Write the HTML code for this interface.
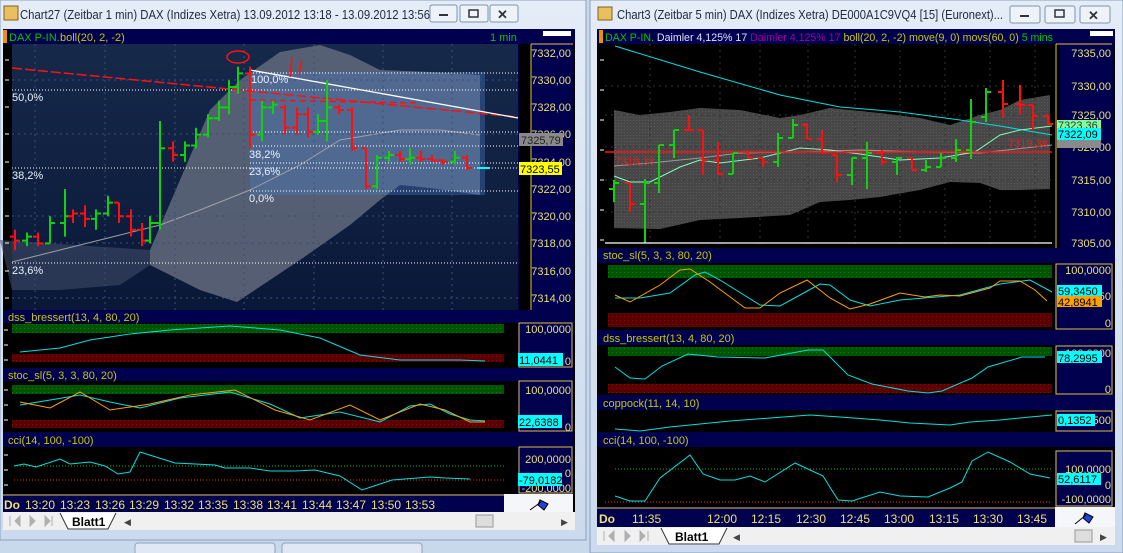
<!DOCTYPE html>
<html><head><meta charset="utf-8">
<style>
html,body{margin:0;padding:0;width:1123px;height:553px;overflow:hidden;background:#c9d9ec;}
svg{display:block;font-family:"Liberation Sans",sans-serif;}
</style></head><body>
<svg id="s" width="1123" height="553" viewBox="0 0 1123 553" xmlns="http://www.w3.org/2000/svg">
<defs>
<linearGradient id="tb" x1="0" y1="0" x2="0" y2="1"><stop offset="0" stop-color="#e4ecf7"/><stop offset="1" stop-color="#cbdaed"/></linearGradient>
<linearGradient id="lbg" x1="0" y1="0" x2="0" y2="1"><stop offset="0" stop-color="#16294a"/><stop offset="1" stop-color="#0a1838"/></linearGradient>
<pattern id="gp" width="4" height="4" patternUnits="userSpaceOnUse"><rect width="4" height="4" fill="#005400"/><rect width="1" height="1" fill="#0a7a0a"/></pattern>
<pattern id="rp" width="4" height="4" patternUnits="userSpaceOnUse"><rect width="4" height="4" fill="#5a0000"/><rect width="1" height="1" fill="#7a1010"/></pattern>
<pattern id="cp" width="3" height="3" patternUnits="userSpaceOnUse"><rect width="3" height="3" fill="#474747"/><rect width="1" height="1" fill="#5a5a5a"/></pattern>
</defs>
<rect width="1123" height="553" fill="#c9d9ec"/>
<!-- LEFT WINDOW -->
<rect x="0" y="0" width="586" height="540" fill="url(#tb)"/>
<rect x="0" y="0" width="586" height="540" fill="none" stroke="#8aa0bb"/>
<rect x="4" y="6" width="14" height="14" fill="#e8c060" stroke="#806020"/>
<text x="20" y="19" font-size="12.5" fill="#1e2a3a" textLength="410" lengthAdjust="spacingAndGlyphs">Chart27 (Zeitbar 1 min)  DAX (Indizes Xetra) 13.09.2012 13:18 - 13.09.2012 13:56</text>
<g fill="#eef3fa" stroke="#7f93ad"><rect x="430" y="5" width="27" height="17" rx="2"/><rect x="460" y="5" width="28" height="17" rx="2"/><rect x="490" y="5" width="28" height="17" rx="2"/></g>
<rect x="439" y="14" width="9" height="2" fill="#333"/><rect x="469" y="10" width="9" height="7" fill="none" stroke="#333" stroke-width="1.5"/>
<text x="497" y="19" font-size="13" fill="#333" font-weight="bold">✕</text>
<rect x="3" y="29" width="572" height="483" fill="#000"/>
<rect x="3" y="29" width="572" height="15" fill="#00004e"/>
<rect x="3" y="30" width="4" height="13" fill="#f09000"/>
<text x="9" y="41" font-size="11" fill="#00c800">DAX P-IN.</text><text x="60" y="41" font-size="11" fill="#c8c800">boll(20, 2, -2)</text>
<text x="490" y="41" font-size="11" fill="#00c800">1 min</text>
<rect x="543" y="31" width="28" height="5" fill="#fff"/>
<rect x="12" y="44" width="506" height="266" fill="url(#lbg)"/>
<rect x="3" y="44" width="9" height="266" fill="#000"/>
<polygon points="150,250 180,180 210,110 240,80 280,52 320,45 350,55 380,70 430,72 480,75 480,195 430,188 400,185 380,200 350,225 300,260 237,302 200,290 170,275 150,265" fill="#5d6679" opacity="0.9"/>
<polygon points="0,240 150,250 150,265 120,285 60,290 12,290" fill="#3d4a66" opacity="0.6"/>
<rect x="250" y="72" width="235" height="123" fill="#4a78c0" opacity="0.38"/>
<polyline points="12,262 100,240 160,225 200,210 250,190 300,165 340,140 400,130 440,130 480,135" fill="none" stroke="#a0a0a8" stroke-width="1"/>
<g stroke="#3a4f78" stroke-dasharray="2,4" stroke-width="1"><line x1="12" y1="80" x2="518" y2="80"/><line x1="12" y1="134" x2="518" y2="134"/><line x1="12" y1="216" x2="518" y2="216"/><line x1="12" y1="243" x2="518" y2="243"/><line x1="12" y1="298" x2="518" y2="298"/>
<line x1="35" y1="44" x2="35" y2="310"/><line x1="105" y1="44" x2="105" y2="310"/><line x1="175" y1="44" x2="175" y2="310"/><line x1="244" y1="44" x2="244" y2="310"/><line x1="314" y1="44" x2="314" y2="310"/><line x1="383" y1="44" x2="383" y2="310"/><line x1="452" y1="44" x2="452" y2="310"/></g>
<g stroke="#fff" stroke-dasharray="1,2" stroke-width="1"><line x1="250" y1="73" x2="518" y2="73"/><line x1="12" y1="90" x2="518" y2="90"/><line x1="250" y1="132" x2="518" y2="132"/><line x1="250" y1="146" x2="518" y2="146"/><line x1="250" y1="163" x2="518" y2="163"/><line x1="12" y1="168" x2="518" y2="168"/><line x1="250" y1="191" x2="518" y2="191"/><line x1="12" y1="263" x2="518" y2="263"/></g>
<g font-size="11" fill="#e8f0ff"><text x="12" y="101">50,0%</text><text x="12" y="179">38,2%</text><text x="12" y="274">23,6%</text><text x="251" y="83">100,0%</text><text x="249" y="158">38,2%</text><text x="249" y="175">23,6%</text><text x="249" y="202">0,0%</text></g>
<line x1="12" y1="68" x2="518" y2="117" stroke="#ff1010" stroke-width="1.5" stroke-dasharray="10,3"/>
<line x1="250" y1="70" x2="518" y2="118" stroke="#ffffff" stroke-width="1.3"/>
<line x1="250" y1="100" x2="420" y2="103" stroke="#ff1010" stroke-width="1.5" stroke-dasharray="6,4"/>
<ellipse cx="238" cy="57" rx="11" ry="6" fill="none" stroke="#ff1010" stroke-width="1.5"/>
<path d="M292,57 L290,77 M302,60 L299,75" stroke="#ff1010" stroke-width="1.5"/>
<g id="lb"></g>
<line x1="478" y1="168" x2="490" y2="168" stroke="#00ffff" stroke-width="2"/>
<rect x="518" y="44" width="55" height="266" fill="#00004e"/>
<rect x="519" y="44" width="12" height="266" fill="#000"/>
<line x1="531" y1="44" x2="531" y2="310" stroke="#e0c040"/>
<line x1="531" y1="44" x2="573" y2="44" stroke="#e0c040"/>
<g font-size="11" fill="#e8e070" text-anchor="end"><text x="571" y="57">7332,00</text><text x="571" y="84">7330,00</text><text x="571" y="111">7328,00</text><text x="571" y="138">7326,00</text><text x="571" y="166">7324,00</text><text x="571" y="193">7322,00</text><text x="571" y="220">7320,00</text><text x="571" y="247">7318,00</text><text x="571" y="275">7316,00</text><text x="571" y="302">7314,00</text></g>
<rect x="519" y="133" width="44" height="13" fill="#8a8a8a"/><text x="521" y="144" font-size="11" fill="#222">7325,79</text>
<rect x="519" y="162" width="43" height="13" fill="#ffff00"/><text x="520" y="173" font-size="11" fill="#000">7323,55</text>
<rect x="3" y="310" width="570" height="13" fill="#00004e"/><text x="8" y="321" font-size="11" fill="#c8c800">dss_bressert(13, 4, 80, 20)</text>
<rect x="12" y="324" width="504" height="9" fill="url(#gp)"/><rect x="12" y="354" width="504" height="8" fill="url(#rp)"/>
<polyline points="20,352 60,348 90,340 130,334 170,330 230,326 280,330 320,338 360,355 400,360 460,360 485,361" fill="none" stroke="#00e0e0"/>
<rect x="3" y="368" width="570" height="13" fill="#00004e"/><text x="8" y="379" font-size="11" fill="#c8c800">stoc_sl(5, 3, 3, 80, 20)</text>
<rect x="12" y="385" width="504" height="9" fill="url(#gp)"/><rect x="12" y="420" width="504" height="8" fill="url(#rp)"/>
<polyline points="20,405 50,400 80,395 110,402 140,408 180,398 230,392 270,404 300,418 340,412 380,422 410,406 430,404 450,414 470,420 485,421" fill="none" stroke="#00e0e0"/>
<polyline points="20,402 50,408 80,392 110,410 150,404 190,395 235,390 275,410 310,420 350,405 380,420 420,404 445,410 470,422 485,422" fill="none" stroke="#ffa000"/>
<rect x="3" y="432" width="570" height="15" fill="#00004e"/><text x="8" y="444" font-size="11" fill="#c8c800">cci(14, 100, -100)</text>
<line x1="14" y1="466" x2="516" y2="466" stroke="#00c000" stroke-dasharray="1,2"/><line x1="14" y1="480" x2="516" y2="480" stroke="#ff2020" stroke-dasharray="1,2"/>
<polyline points="14,466 24,464 36,467 60,459 70,464 90,462 105,466 118,474 130,472 140,452 175,463 215,465 225,468 250,468 270,471 295,471 315,470 340,476 362,490 392,480 430,477 445,478 470,479" fill="none" stroke="#00e0e0"/>
<g fill="#00004e"><rect x="518" y="323" width="55" height="45"/><rect x="518" y="381" width="55" height="51"/><rect x="518" y="447" width="55" height="47"/></g>
<g stroke="#e0c040" fill="none"><rect x="519" y="323" width="53" height="44"/><rect x="519" y="381" width="53" height="50"/><rect x="519" y="447" width="53" height="46"/></g>
<g fill="#000"><rect x="504" y="323" width="14" height="45"/><rect x="504" y="381" width="14" height="51"/><rect x="504" y="447" width="14" height="47"/></g>
<g font-size="11" fill="#e8e070" text-anchor="end"><text x="571" y="333">100,0000</text><text x="571" y="365">0</text><text x="571" y="394">100,0000</text><text x="571" y="431">0</text><text x="571" y="463">200,0000</text><text x="571" y="477">0</text><text x="571" y="492">-200,0000</text></g>
<rect x="518" y="353" width="45" height="13" fill="#00ffff"/><text x="519" y="364" font-size="11" fill="#000">11,0441</text>
<rect x="518" y="415" width="44" height="13" fill="#00ffff"/><text x="519" y="426" font-size="11" fill="#000">22,6388</text>
<rect x="518" y="473" width="44" height="13" fill="#00ffff"/><text x="519" y="484" font-size="11" fill="#000">-79,0182</text>
<g stroke="#fff"><line x1="4" y1="330" x2="8" y2="330"/><line x1="4" y1="345" x2="8" y2="345"/><line x1="4" y1="360" x2="8" y2="360"/><line x1="4" y1="390" x2="8" y2="390"/><line x1="4" y1="405" x2="8" y2="405"/><line x1="4" y1="420" x2="8" y2="420"/><line x1="4" y1="455" x2="8" y2="455"/><line x1="4" y1="470" x2="8" y2="470"/><line x1="4" y1="485" x2="8" y2="485"/></g>
<rect x="3" y="494" width="570" height="18" fill="#00004e"/><line x1="3" y1="495" x2="516" y2="495" stroke="#e0c040"/>
<rect x="504" y="494" width="69" height="18" fill="#f4f6fa"/>
<path d="M530,510 L541,502 M540,500 L548,504 L544,510 L538,505Z" stroke="#000" fill="#2040e0"/>
<g font-size="12" fill="#f0e070"><text x="4" y="509" font-weight="bold">Do</text><text x="25" y="509">13:20</text><text x="60" y="509">13:23</text><text x="95" y="509">13:26</text><text x="129" y="509">13:29</text><text x="164" y="509">13:32</text><text x="198" y="509">13:35</text><text x="233" y="509">13:38</text><text x="267" y="509">13:41</text><text x="302" y="509">13:44</text><text x="336" y="509">13:47</text><text x="371" y="509">13:50</text><text x="405" y="509">13:53</text></g>
<rect x="3" y="512" width="572" height="18" fill="#f0f0f0"/>
<path d="M10,516 v10 M20,516 l-5,5 l5,5z M30,516 l5,5 l-5,5z M45,516 l5,5 l-5,5z M52,516 v10" stroke="#b0b0b0" fill="#b0b0b0"/>
<path d="M60,513 L68,529 L108,529 L116,513" fill="#fff" stroke="#333"/>
<text x="72" y="526" font-size="12" font-weight="bold" fill="#000">Blatt1</text>
<text x="124" y="525" font-size="9" fill="#444">◀</text>
<rect x="476" y="515" width="17" height="12" fill="#ddd" stroke="#999"/><text x="561" y="525" font-size="9" fill="#444">▶</text>
<rect x="135" y="543" width="140" height="12" rx="3" fill="#dfe8f4" stroke="#8fa2bb"/>
<rect x="282" y="543" width="140" height="12" rx="3" fill="#dfe8f4" stroke="#8fa2bb"/>

<!-- RIGHT WINDOW -->
<rect x="590" y="0" width="533" height="553" fill="url(#tb)"/>
<rect x="590" y="0" width="533" height="553" fill="none" stroke="#8aa0bb"/>
<rect x="598" y="7" width="14" height="13" fill="#e8c060" stroke="#806020"/>
<text x="617" y="19" font-size="12.5" fill="#1e2a3a" textLength="386" lengthAdjust="spacingAndGlyphs">Chart3 (Zeitbar 5 min)  DAX (Indizes Xetra) DE000A1C9VQ4 [15] (Euronext)...</text>
<g fill="#eef3fa" stroke="#7f93ad"><rect x="1010" y="6" width="30" height="17" rx="2"/><rect x="1045" y="6" width="30" height="17" rx="2"/><rect x="1080" y="6" width="30" height="17" rx="2"/></g>
<rect x="1020" y="15" width="9" height="2" fill="#333"/><rect x="1055" y="10" width="9" height="7" fill="none" stroke="#333" stroke-width="1.5"/>
<text x="1088" y="20" font-size="13" fill="#333" font-weight="bold">✕</text>
<rect x="597" y="29" width="518" height="498" fill="#000"/>
<rect x="597" y="29" width="518" height="15" fill="#00004e"/>
<rect x="599" y="30" width="4" height="13" fill="#f09000"/>
<text x="605" y="41" font-size="11" textLength="448" lengthAdjust="spacingAndGlyphs"><tspan fill="#00c800">DAX P-IN.</tspan><tspan fill="#e0e0ff"> Daimler  4,125% 17 </tspan><tspan fill="#a000a0">Daimler  4,125% 17 </tspan><tspan fill="#c8c800">boll(20, 2, -2) move(9, 0) movs(60, 0)</tspan><tspan fill="#00c800">   5 mins</tspan></text>
<rect x="1090" y="31" width="23" height="5" fill="#fff"/>
<polygon points="614,110 640,115 670,112 700,108 740,110 780,118 800,115 830,108 880,113 920,118 950,125 980,115 1000,110 1020,100 1050,95 1050,189 1020,190 1000,190 980,183 950,182 920,190 880,197 850,200 820,202 790,215 740,218 700,220 660,229 614,228" fill="url(#cp)"/>
<g stroke="#333" stroke-dasharray="2,4"><line x1="605" y1="115" x2="1052" y2="115"/><line x1="605" y1="147" x2="1052" y2="147"/><line x1="605" y1="180" x2="1052" y2="180"/><line x1="605" y1="212" x2="1052" y2="212"/><line x1="605" y1="86" x2="1052" y2="86"/><line x1="650" y1="44" x2="650" y2="248"/><line x1="720" y1="44" x2="720" y2="248"/><line x1="760" y1="44" x2="760" y2="248"/><line x1="808" y1="44" x2="808" y2="248"/><line x1="855" y1="44" x2="855" y2="248"/><line x1="900" y1="44" x2="900" y2="248"/><line x1="945" y1="44" x2="945" y2="248"/><line x1="990" y1="44" x2="990" y2="248"/><line x1="1035" y1="44" x2="1035" y2="248"/></g>
<polyline points="615,46 700,72 780,95 840,107 900,112 960,120 1000,126 1052,135" fill="none" stroke="#00e0e0"/>
<polyline points="614,166 650,163 700,158 740,153 800,152 860,150 920,152 980,153 1052,145" fill="none" stroke="#9a9a9a"/>
<polyline points="614,176 630,182 650,182 680,167 700,160 720,163 760,158 800,148 830,150 860,154 900,160 940,158 975,152 1000,135 1020,130 1052,126" fill="none" stroke="#80ffc0"/>
<line x1="605" y1="152" x2="1052" y2="152" stroke="#ff1010" stroke-width="1.5"/>
<text x="615" y="165" font-size="11" fill="#e02020">7319,38</text><text x="1008" y="147" font-size="11" fill="#e02020">7319,38</text>
<g id="rb"></g>
<line x1="605" y1="243" x2="1052" y2="243" stroke="#fff" stroke-width="1.3"/>
<rect x="1055" y="44" width="58" height="204" fill="#00004e"/><rect x="1055" y="44" width="5" height="204" fill="#000"/>
<line x1="1056" y1="44" x2="1056" y2="248" stroke="#e0c040"/><line x1="1056" y1="44" x2="1112" y2="44" stroke="#e0c040"/>
<g font-size="11" fill="#e8e070" text-anchor="end"><text x="1111" y="57">7335,00</text><text x="1111" y="90">7330,00</text><text x="1111" y="119">7325,00</text><text x="1111" y="151">7320,00</text><text x="1111" y="184">7315,00</text><text x="1111" y="216">7310,00</text><text x="1111" y="247">7305,00</text></g>
<rect x="1057" y="120" width="44" height="10" fill="#80ffa0"/><text x="1058" y="129" font-size="11" fill="#333">7323,36</text>
<rect x="1057" y="128" width="44" height="12" fill="#00ffff"/><text x="1058" y="138" font-size="11" fill="#000">7322,09</text>
<rect x="1057" y="140" width="44" height="8" fill="#8a8a8a"/>
<rect x="597" y="248" width="518" height="15" fill="#00004e"/><text x="603" y="259" font-size="11" fill="#c8c800">stoc_sl(5, 3, 3, 80, 20)</text>
<rect x="608" y="265" width="444" height="13" fill="url(#gp)"/><rect x="608" y="313" width="444" height="14" fill="url(#rp)"/>
<polyline points="615,298 640,298 670,293 695,275 705,272 720,280 760,305 780,306 800,295 820,284 830,285 850,300 870,306 900,300 960,295 1000,284 1030,280 1052,292" fill="none" stroke="#00e0e0"/>
<polyline points="615,295 630,302 660,285 680,270 690,269 710,282 745,308 760,308 780,293 807,280 830,298 850,309 870,304 900,293 925,297 940,295 960,296 990,288 1000,281 1020,281 1035,290 1047,301" fill="none" stroke="#ffa000"/>
<rect x="597" y="330" width="518" height="15" fill="#00004e"/><text x="603" y="342" font-size="11" fill="#c8c800">dss_bressert(13, 4, 80, 20)</text>
<rect x="608" y="347" width="444" height="9" fill="url(#gp)"/><rect x="608" y="384" width="444" height="9" fill="url(#rp)"/>
<polyline points="615,367 630,378 645,379 662,366 688,354 718,357 765,358 808,350 823,350 848,375 872,384 908,391 928,393 942,391 972,378 988,367 1022,357 1045,357" fill="none" stroke="#00e0e0"/>
<rect x="597" y="395" width="518" height="15" fill="#00004e"/><text x="603" y="407" font-size="11" fill="#c8c800">coppock(11, 14, 10)</text>
<polyline points="615,429 640,431 670,427 700,424 730,421 770,418 810,415 840,417 880,420 910,423 950,425 970,422 1000,420 1030,417 1052,415" fill="none" stroke="#00e0e0"/>
<rect x="597" y="432" width="518" height="15" fill="#00004e"/><text x="603" y="444" font-size="11" fill="#c8c800">cci(14, 100, -100)</text>
<line x1="615" y1="469" x2="1052" y2="469" stroke="#00c000" stroke-dasharray="1,2"/><line x1="605" y1="502" x2="1052" y2="502" stroke="#ff2020" stroke-dasharray="1,2"/>
<polyline points="615,496 630,501 645,501 660,478 690,455 703,474 720,480 735,480 750,476 765,482 795,463 823,476 838,500 852,501 880,492 900,496 928,497 950,488 962,482 972,461 988,452 1010,462 1030,474 1050,478" fill="none" stroke="#00e0e0"/>
<g fill="#00004e"><rect x="1055" y="263" width="58" height="67"/><rect x="1055" y="345" width="58" height="50"/><rect x="1055" y="410" width="58" height="22"/><rect x="1055" y="450" width="58" height="57"/></g>
<g stroke="#e0c040" fill="none"><rect x="1056" y="264" width="56" height="65"/><rect x="1056" y="346" width="56" height="48"/><rect x="1056" y="411" width="56" height="20"/><rect x="1056" y="451" width="56" height="55"/></g>
<g font-size="11" fill="#e8e070" text-anchor="end"><text x="1111" y="274">100,0000</text><text x="1111" y="300">50</text><text x="1111" y="327">0</text><text x="1111" y="357">100,0000</text><text x="1111" y="393">0</text><text x="1111" y="424">0,1500</text><text x="1111" y="473">100,0000</text><text x="1111" y="489">0</text><text x="1111" y="503">-100,0000</text></g>
<rect x="1057" y="285" width="45" height="12" fill="#00ffff"/><text x="1058" y="295" font-size="11" fill="#000">59,3450</text>
<rect x="1057" y="296" width="45" height="11" fill="#ffa000"/><text x="1058" y="306" font-size="11" fill="#000">42,8941</text>
<rect x="1057" y="351" width="45" height="12" fill="#00ffff"/><text x="1058" y="362" font-size="11" fill="#000">78,2995</text>
<rect x="1057" y="414" width="38" height="12" fill="#00ffff"/><text x="1058" y="424" font-size="11" fill="#000">0,1352</text>
<rect x="1057" y="473" width="44" height="12" fill="#00ffff"/><text x="1058" y="483" font-size="11" fill="#000">52,6117</text>
<rect x="597" y="507" width="518" height="20" fill="#00004e"/><line x1="597" y1="508" x2="1055" y2="508" stroke="#e0c040"/>
<rect x="1055" y="507" width="60" height="20" fill="#f4f6fa"/>
<path d="M1075,524 L1086,515 M1085,513 L1093,517 L1089,523 L1083,518Z" stroke="#000" fill="#2040e0"/>
<g font-size="12" fill="#f0e070"><text x="599" y="523" font-weight="bold">Do</text><text x="632" y="523">11:35</text><text x="707" y="523">12:00</text><text x="751" y="523">12:15</text><text x="796" y="523">12:30</text><text x="840" y="523">12:45</text><text x="884" y="523">13:00</text><text x="929" y="523">13:15</text><text x="973" y="523">13:30</text><text x="1017" y="523">13:45</text></g>
<rect x="597" y="527" width="518" height="18" fill="#f0f0f0"/>
<path d="M604,531 v10 M614,531 l-5,5 l5,5z M625,531 l5,5 l-5,5z M640,531 l5,5 l-5,5z M648,531 v10" stroke="#b0b0b0" fill="#b0b0b0"/>
<path d="M661,528 L669,544 L719,544 L727,528" fill="#fff" stroke="#333"/>
<text x="675" y="541" font-size="12" font-weight="bold" fill="#000">Blatt1</text>
<text x="733" y="540" font-size="9" fill="#444">◀</text>
<rect x="1075" y="530" width="17" height="12" fill="#ddd" stroke="#999"/><text x="1100" y="540" font-size="9" fill="#444">▶</text>
<g stroke="#fff"><line x1="600" y1="60" x2="604" y2="60"/><line x1="600" y1="90" x2="604" y2="90"/><line x1="600" y1="120" x2="604" y2="120"/><line x1="600" y1="150" x2="604" y2="150"/><line x1="600" y1="180" x2="604" y2="180"/><line x1="600" y1="210" x2="604" y2="210"/><line x1="600" y1="240" x2="604" y2="240"/></g>
<g stroke="#fff"><line x1="5" y1="60" x2="9" y2="60"/><line x1="5" y1="80" x2="9" y2="80"/><line x1="5" y1="107" x2="9" y2="107"/><line x1="5" y1="134" x2="9" y2="134"/><line x1="5" y1="162" x2="9" y2="162"/><line x1="5" y1="189" x2="9" y2="189"/><line x1="5" y1="216" x2="9" y2="216"/><line x1="5" y1="243" x2="9" y2="243"/><line x1="5" y1="271" x2="9" y2="271"/><line x1="5" y1="298" x2="9" y2="298"/></g>
</svg>
<script>
(function(){
var NS="http://www.w3.org/2000/svg";
function bar(g,x,o,h,l,c,col){
 var p=document.createElementNS(NS,"path");
 p.setAttribute("d","M"+x+","+h+"V"+l+"M"+(x-5)+","+o+"H"+x+"M"+x+","+c+"H"+(x+5));
 p.setAttribute("stroke",col=="g"?"#10d010":"#ff1010");p.setAttribute("stroke-width","2");p.setAttribute("fill","none");
 g.appendChild(p);}
var Y=function(p){return 53+(7332-p)*13.6;};
var L=[[15,7318.5,7319,7317.5,7318.2,'r'],[27,7318.2,7318.8,7317.8,7318.5,'g'],[38,7318.5,7318.8,7317.8,7318,'r'],[50,7318,7320,7318,7319.5,'g'],[65,7319.5,7322,7318.5,7320,'g'],[73,7320,7320.5,7319.5,7320.2,'r'],[85,7320.2,7320.8,7319.2,7319.8,'r'],[96,7319.8,7320.5,7319,7320.2,'g'],[108,7320.2,7321.5,7320,7321,'g'],[119,7321,7321,7319.5,7320,'r'],[131,7320,7320.5,7318.5,7319,'r'],[142,7319,7319.5,7317.8,7318.2,'r'],[150,7318.2,7320,7318,7319.5,'g'],[160,7319.5,7327,7319,7325,'g'],[173,7325,7325.5,7324,7324.5,'r'],[185,7324.5,7325.5,7324,7325.2,'g'],[196,7325.2,7326.5,7325,7326,'g'],[208,7326,7327.5,7325.8,7327.2,'g'],[219,7327.2,7328.5,7327,7328,'g'],[229,7328,7330,7327.5,7329.5,'g'],[238,7329.5,7331,7329,7330.5,'g'],[250,7330.5,7331,7325,7326,'r'],[262,7326,7328.5,7325.5,7328,'g'],[273,7328,7328.5,7327.5,7328.2,'g'],[285,7328,7328.2,7326,7326.5,'r'],[297,7326.5,7328,7326,7327.5,'r'],[308,7327.5,7328,7325.8,7326.2,'r'],[318,7326.2,7327.5,7326,7327,'g'],[327,7327,7330,7325.5,7328,'g'],[339,7328,7328.2,7327.5,7327.8,'r'],[352,7327.8,7328,7324.8,7325,'r'],[366,7325,7325,7322,7322.2,'r'],[377,7322.2,7324.5,7322,7324.3,'g'],[389,7324.3,7324.8,7324,7324.5,'g'],[400,7324.5,7324.8,7324,7324.2,'r'],[410,7324.2,7325,7323.8,7324.3,'g'],[421,7324.3,7324.8,7324,7324.2,'r'],[432,7324.2,7324.5,7324,7324.1,'r'],[443,7324.1,7324.2,7323.8,7324,'r'],[455,7324,7324.8,7323.8,7324.3,'g'],[467,7324.3,7324.5,7323.4,7323.55,'r']];
var g=document.getElementById("lb");
L.forEach(function(b){bar(g,b[0],Y(b[1]),Y(b[2]),Y(b[3]),Y(b[4]),b[5]);});
var R=[[614,189,180,202,183,'g'],[630,183,183,212,204,'r'],[645,204,179,243,183,'g'],[659,183,145,193,145,'g'],[674,145,130,158,130,'g'],[689,130,115,130,130,'r'],[703,130,130,175,160,'r'],[718,160,142,174,174,'r'],[733,174,153,174,153,'g'],[748,152,152,158,158,'r'],[763,158,158,167,162,'r'],[778,162,133,167,138,'g'],[793,138,119,138,125,'g'],[807,125,123,139,139,'r'],[822,139,130,153,153,'r'],[837,155,155,182,175,'r'],[852,175,158,185,158,'g'],[867,158,142,189,153,'g'],[882,153,150,165,162,'r'],[897,162,157,175,158,'g'],[912,158,158,170,170,'r'],[926,170,160,172,167,'g'],[941,167,153,167,158,'g'],[956,158,139,162,150,'g'],[971,150,99,159,122,'g'],[986,117,88,122,92,'g'],[1003,92,80,118,104,'r'],[1020,104,85,115,105,'r'],[1033,105,105,130,116,'r'],[1048,116,115,125,124,'r']];
var g2=document.getElementById("rb");
R.forEach(function(b){bar(g2,b[0],b[1],b[2],b[3],b[4],b[5]);});
})();
</script>
</body></html>
